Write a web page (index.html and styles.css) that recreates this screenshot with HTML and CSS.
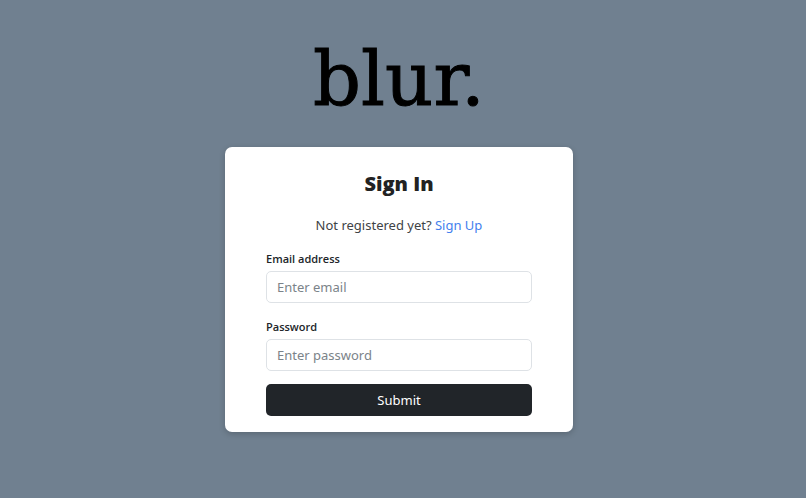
FILE: index.html
```html
<!DOCTYPE html>
<html lang="en">
<head>
<meta charset="utf-8">
<meta name="viewport" content="width=device-width, initial-scale=1">
<title>blur. – Sign In</title>
<link rel="stylesheet" href="styles.css">
</head>
<body>
<main class="page">
  <div class="brand">blur.</div>
  <form class="card">
    <h1 class="title">Sign In</h1>
    <p class="hint">Not registered yet? <a class="link" href="#signup">Sign Up</a></p>
    <div class="fields">
      <div class="field">
        <label class="label" for="email">Email address</label>
        <input class="input" id="email" type="email" placeholder="Enter email">
      </div>
      <div class="field">
        <label class="label" for="password">Password</label>
        <input class="input" id="password" type="password" placeholder="Enter password">
      </div>
    </div>
    <button class="submit" type="submit">Submit</button>
  </form>
</main>
</body>
</html>
```
FILE: styles.css
```css
* {
  box-sizing: border-box;
}

body {
  margin: 0;
  background: #708090;
  color: #212529;
  font-family: "Noto Sans", "Open Sans", sans-serif;
  font-size: 13px;
}

.page {
  display: flex;
  flex-direction: column;
  align-items: center;
  min-height: 100vh;
  padding: 29px 16px 32px 8px;
}

.brand {
  margin-bottom: 18px;
  color: #000;
  font-family: "DejaVu Serif", serif;
  font-size: 75px;
  line-height: 100px;
  -webkit-text-stroke: 1px #000;
}

.card {
  width: 100%;
  max-width: 348px;
  padding: 24px 41px 16px;
  border-radius: 7px;
  background: #fff;
  box-shadow: 0 2px 6px rgba(0, 0, 0, 0.2);
}

.title {
  margin: 0 0 18px;
  color: #222;
  font-family: "Open Sans", "Noto Sans", sans-serif;
  font-size: 20px;
  font-weight: 800;
  line-height: 26px;
  text-align: center;
}

.hint {
  margin: 0 0 14px;
  color: #404346;
  line-height: 21px;
  text-align: center;
}

.link {
  color: #4380ee;
  text-decoration: none;
}

.fields {
  display: grid;
  gap: 15px;
  margin-bottom: 13px;
}

.label {
  display: block;
  margin-bottom: 3px;
  font-family: "Open Sans", "Noto Sans", sans-serif;
  font-size: 11px;
  font-weight: 600;
  line-height: 18px;
}

.input {
  display: block;
  width: 100%;
  height: 32px;
  padding: 0 10px;
  border: 1px solid #dee2e6;
  border-radius: 5px;
  background: #fff;
  color: #212529;
  font: inherit;
}

.input::placeholder {
  color: #7b8389;
}

.submit {
  display: block;
  width: 100%;
  height: 32px;
  border: 0;
  border-radius: 5px;
  background: #212529;
  color: #fff;
  font: inherit;
}
```
